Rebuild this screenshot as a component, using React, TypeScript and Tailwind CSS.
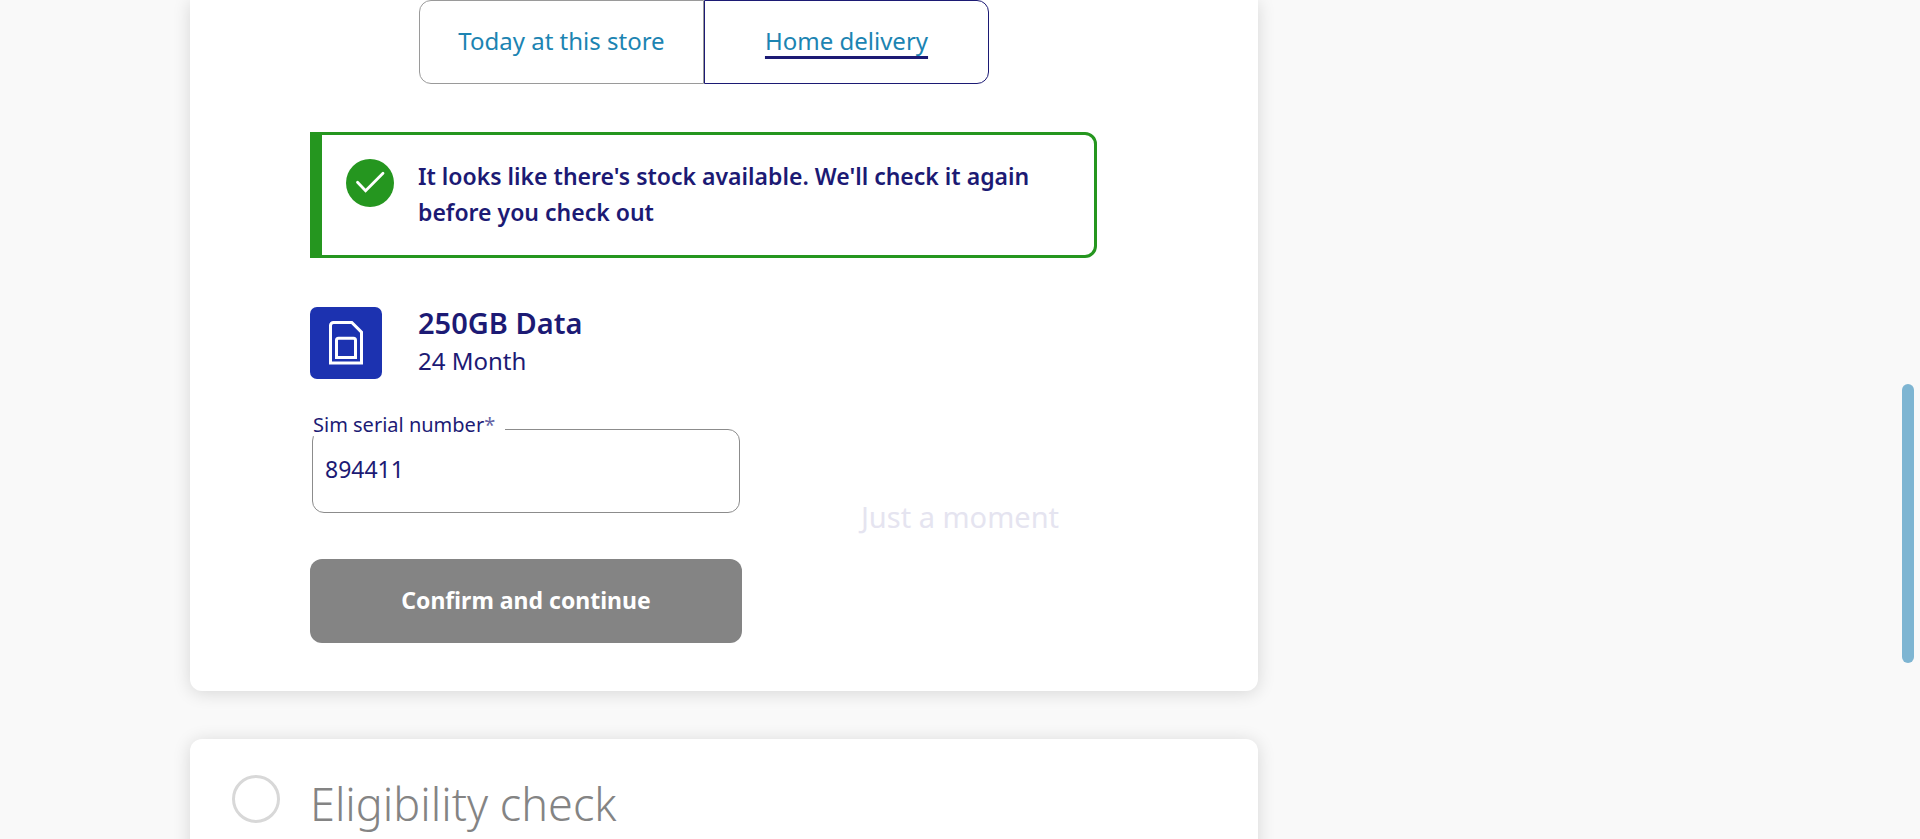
import type { ReactNode } from "react";

function Card({ className, children }: { className: string; children: ReactNode }) {
  return (
    <section className={`bg-white shadow-[0_2px_18px_rgba(0,0,0,0.14)] ${className}`}>{children}</section>
  );
}

function DeliveryTabs() {
  return (
    <div role="tablist" className="ml-[109px] grid max-w-[570px] grid-cols-2 text-[24px] leading-[30px] text-[#1c84b2]">
      <button type="button" role="tab" aria-selected="false" className="h-[84px] rounded-l-xl border border-[#9a9a9a] pb-0.5">
        Today at this store
      </button>
      <button type="button" role="tab" aria-selected="true" className="h-[84px] rounded-r-xl border border-[#1c1a74] pb-0.5">
        <span className="underline decoration-[#1c1a74] decoration-[3px] underline-offset-[6px] [text-decoration-skip-ink:none]">
          Home delivery
        </span>
      </button>
    </div>
  );
}

function StockAlert() {
  return (
    <div role="status" className="mt-12 flex max-w-[787px] gap-6 rounded-r-xl border-[3px] border-l-[12px] border-[#25961f] px-6 pt-[23px] pb-[25px]">
      <svg viewBox="0 0 48 48" className="mt-px size-12 shrink-0" fill="none" aria-hidden="true">
        <circle cx="24" cy="24" r="24" fill="#25961f" />
        <path d="M11.5 23.2 19.6 31.8 37 14.3" stroke="#fff" strokeWidth="2.8" strokeLinecap="round" />
      </svg>
      <p className="text-[23px] leading-9 font-semibold">
        It looks like there's stock available. We'll check it again before you check out
      </p>
    </div>
  );
}

function SimPlan() {
  return (
    <div className="mt-[49px] flex gap-9">
      <svg viewBox="0 0 72 72" className="size-[72px] shrink-0" fill="none" aria-hidden="true">
        <rect width="72" height="72" rx="7" fill="#1c32b0" />
        <g stroke="#fff" strokeWidth="3">
          <path d="M20.5 56V18.5a3 3 0 0 1 3-3H41.8L51.5 25.2V56Z" />
          <path d="M26.5 50.5V33.2a2 2 0 0 1 2-2h15a2 2 0 0 1 2 2V50.5Z" />
        </g>
      </svg>
      <div>
        <h3 className="text-[29px] leading-8 font-semibold">250GB Data</h3>
        <p className="mt-1 text-[24px] leading-9">24 Month</p>
      </div>
    </div>
  );
}

function SerialForm() {
  return (
    <form className="mt-12 max-w-[432px]">
      <div className="relative mx-0.5 pt-0.5">
        <label htmlFor="serial" className="absolute -top-3.5 left-0 bg-white pt-px pr-2.5 pl-px text-[20px] leading-[22px]">
          Sim serial number<span className="text-[#6664a5]">*</span>
        </label>
        <input
          id="serial"
          type="text"
          defaultValue="894411"
          className="block h-[84px] w-full rounded-xl border border-[#8c8c8c] bg-white px-3 pb-1 text-[23px] outline-none"
        />
      </div>
      <button type="button" className="mt-[46px] h-[84px] w-full rounded-xl bg-[#848484] pb-0.5 text-[23px] leading-[30px] font-bold text-white">
        Confirm and continue
      </button>
    </form>
  );
}

export default function App() {
  return (
    <div className="relative h-screen overflow-hidden bg-[#f9f9f9] font-['Noto_Sans',sans-serif] text-[#1c1a74]">
      <main className="ml-[190px] max-w-[1068px]">
        <Card className="rounded-b-xl px-[120px] pb-12">
          <DeliveryTabs />
          <StockAlert />
          <SimPlan />
          <SerialForm />
        </Card>
        <Card className="mt-12 flex gap-[30px] rounded-t-xl pt-9 pr-9 pb-24 pl-[42px]">
          <span className="size-12 shrink-0 rounded-full border-[3px] border-[#d8d8d8]" />
          <h2 className="text-[45px] leading-[58px] font-light text-[#848484]">Eligibility check</h2>
        </Card>
      </main>

      <p className="pointer-events-none absolute inset-x-0 top-[499px] text-center text-[29px] leading-9 text-[#e5e4f0]">
        Just a moment
      </p>
      <div className="absolute top-[384px] right-1.5 h-[279px] w-3 rounded-full bg-[#7eb5d2]" />
    </div>
  );
}
